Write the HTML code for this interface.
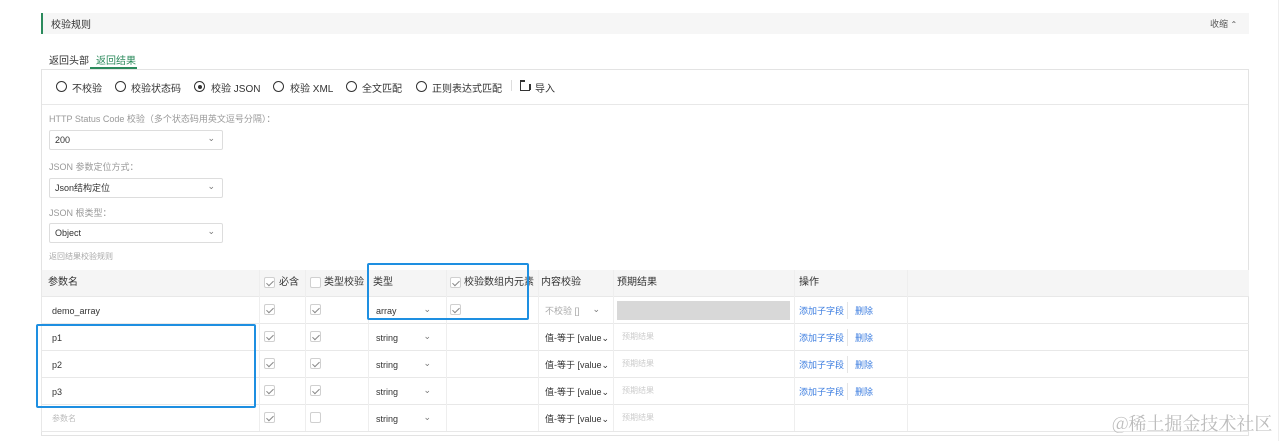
<!DOCTYPE html>
<html><head><meta charset="utf-8"><style>
*{box-sizing:border-box;margin:0;padding:0}
html,body{width:1280px;height:441px;overflow:hidden}
body{background:#fff;font-family:"Liberation Sans","Noto Sans CJK SC",sans-serif;font-size:10px;color:#333;position:relative}
.a{position:absolute}
.cb{position:absolute;width:11px;height:11px;border:1px solid #d0d0d0;border-radius:2px;background:#fff}
.cb.c::after{content:"";position:absolute;left:3px;top:1px;width:3px;height:6px;border:solid #888;border-width:0 1px 1px 0;transform:rotate(45deg)}
.rad{position:absolute;width:11px;height:11px;border:1.5px solid #333;border-radius:50%}
.sel{position:absolute;left:49px;width:174px;height:20px;border:1px solid #ddd;border-radius:2px;padding-left:5px;line-height:18px;font-size:9px}
.sel::after,.dd::after{content:"⌄";position:absolute;right:7px;top:-2px;font-size:9px;color:#777}
.lbl{position:absolute;left:49px;font-size:9px;color:#999}
.row{position:absolute;left:41px;width:1208px;height:27px;border-bottom:1px solid #e8e8e8}
.vl{position:absolute;top:270px;width:1px;height:161px;background:#eee}
.t{position:absolute;font-size:9px;line-height:12px}
.lk{color:#3d7ee0}
</style></head><body>
<div class="a" style="left:41px;top:13px;width:1208px;height:21px;background:#f6f6f6;border-left:2px solid #2b8a5c"></div>
<div class="a" style="left:51px;top:16px;font-size:10px">校验规则</div>
<div class="a" style="left:1210px;top:17px;font-size:9px;color:#555">收缩 <span style="font-size:8px">⌃</span></div>
<div class="a" style="left:49px;top:52px;font-size:10px">返回头部</div>
<div class="a" style="left:96px;top:52px;font-size:10px;color:#2b8a5c">返回结果</div>
<div class="a" style="left:90px;top:67px;width:47px;height:2px;background:#2b8a5c"></div>
<div class="a" style="left:41px;top:69px;width:1208px;height:367px;border:1px solid #e3e3e3"></div>
<div class="a" style="left:42px;top:104px;width:1206px;height:1px;background:#e8e8e8"></div>
<div class="rad" style="left:56px;top:81px"></div><div class="a" style="left:72px;top:80px">不校验</div>
<div class="rad" style="left:115px;top:81px"></div><div class="a" style="left:131px;top:80px">校验状态码</div>
<div class="rad" style="left:194px;top:81px"></div><div class="a" style="left:197.5px;top:84.5px;width:4px;height:4px;border-radius:50%;background:#333"></div><div class="a" style="left:211px;top:80px">校验 JSON</div>
<div class="rad" style="left:273px;top:81px"></div><div class="a" style="left:290px;top:80px">校验 XML</div>
<div class="rad" style="left:346px;top:81px"></div><div class="a" style="left:362px;top:80px">全文匹配</div>
<div class="rad" style="left:416px;top:81px"></div><div class="a" style="left:432px;top:80px">正则表达式匹配</div>
<div class="a" style="left:511px;top:80px;width:1px;height:11px;background:#ddd"></div>
<div class="a" style="left:520px;top:81px;width:10px;height:10px;border:1.5px solid #333;border-top:none;border-right:none"></div>
<div class="a" style="left:520px;top:80px;width:5px;height:1.5px;background:#333"></div>
<div class="a" style="left:529px;top:84px;width:1.5px;height:6px;background:#333"></div>
<div class="a" style="left:535px;top:80px">导入</div>
<div class="lbl" style="top:112px">HTTP Status Code 校验（多个状态码用英文逗号分隔）：</div>
<div class="sel" style="top:130px">200</div>
<div class="lbl" style="top:160px">JSON 参数定位方式：</div>
<div class="sel" style="top:178px">Json结构定位</div>
<div class="lbl" style="top:206px">JSON 根类型：</div>
<div class="sel" style="top:223px">Object</div>
<div class="lbl" style="top:251px;font-size:8px;color:#aaa">返回结果校验规则</div>
<div class="row" style="top:270px;background:#f5f5f5"></div>
<div class="row" style="top:297px"></div>
<div class="row" style="top:324px"></div>
<div class="row" style="top:351px"></div>
<div class="row" style="top:378px"></div>
<div class="row" style="top:405px"></div>
<div class="a" style="left:41px;top:270px;width:1px;height:162px;background:#e8e8e8"></div>
<div class="vl" style="left:259px"></div><div class="vl" style="left:305px"></div><div class="vl" style="left:368px"></div><div class="vl" style="left:446px"></div><div class="vl" style="left:538px"></div><div class="vl" style="left:613px"></div><div class="vl" style="left:794px"></div><div class="vl" style="left:907px"></div>
<div class="t" style="left:48px;top:277px;font-size:10px">参数名</div>
<div class="cb c" style="left:264px;top:277px"></div><div class="t" style="left:279px;top:277px;font-size:10px">必含</div>
<div class="cb" style="left:310px;top:277px"></div><div class="t" style="left:324px;top:277px;font-size:10px">类型校验</div>
<div class="t" style="left:373px;top:277px;font-size:10px">类型</div>
<div class="cb c" style="left:450px;top:277px"></div><div class="t" style="left:464px;top:277px;font-size:10px">校验数组内元素</div>
<div class="t" style="left:541px;top:277px;font-size:10px">内容校验</div>
<div class="t" style="left:617px;top:277px;font-size:10px">预期结果</div>
<div class="t" style="left:799px;top:277px;font-size:10px">操作</div>
<div class="t" style="left:52px;top:305px">demo_array</div>
<div class="t" style="left:52px;top:332px">p1</div>
<div class="t" style="left:52px;top:359px">p2</div>
<div class="t" style="left:52px;top:386px">p3</div>
<div class="t" style="left:52px;top:413px;color:#bbb;font-size:8px">参数名</div>
<div class="cb c" style="left:264px;top:304px"></div><div class="cb c" style="left:310px;top:304px"></div>
<div class="cb c" style="left:264px;top:331px"></div><div class="cb c" style="left:310px;top:331px"></div>
<div class="cb c" style="left:264px;top:358px"></div><div class="cb c" style="left:310px;top:358px"></div>
<div class="cb c" style="left:264px;top:385px"></div><div class="cb c" style="left:310px;top:385px"></div>
<div class="cb c" style="left:264px;top:412px"></div><div class="cb" style="left:310px;top:412px"></div>
<div class="t dd" style="left:376px;top:305px;width:62px">array</div>
<div class="t dd" style="left:376px;top:332px;width:62px">string</div>
<div class="t dd" style="left:376px;top:359px;width:62px">string</div>
<div class="t dd" style="left:376px;top:386px;width:62px">string</div>
<div class="t dd" style="left:376px;top:413px;width:62px">string</div>
<div class="cb c" style="left:450px;top:304px"></div>
<div class="t dd" style="left:545px;top:305px;width:62px;color:#aaa">不校验 []</div>
<div class="t" style="left:545px;top:332px">值-等于 [value⌄</div>
<div class="t" style="left:545px;top:359px">值-等于 [value⌄</div>
<div class="t" style="left:545px;top:386px">值-等于 [value⌄</div>
<div class="t" style="left:545px;top:413px">值-等于 [value⌄</div>
<div class="a" style="left:617px;top:301px;width:173px;height:19px;background:#d8d8d8"></div>
<div class="t" style="left:622px;top:331px;color:#ccc;font-size:8px">预期结果</div>
<div class="t" style="left:622px;top:358px;color:#ccc;font-size:8px">预期结果</div>
<div class="t" style="left:622px;top:385px;color:#ccc;font-size:8px">预期结果</div>
<div class="t" style="left:622px;top:412px;color:#ccc;font-size:8px">预期结果</div>
<div class="t lk" style="left:799px;top:305px">添加子字段</div><div class="a" style="left:847px;top:302px;width:1px;height:17px;background:#e5e5e5"></div><div class="t lk" style="left:855px;top:305px">删除</div>
<div class="t lk" style="left:799px;top:332px">添加子字段</div><div class="a" style="left:847px;top:329px;width:1px;height:17px;background:#e5e5e5"></div><div class="t lk" style="left:855px;top:332px">删除</div>
<div class="t lk" style="left:799px;top:359px">添加子字段</div><div class="a" style="left:847px;top:356px;width:1px;height:17px;background:#e5e5e5"></div><div class="t lk" style="left:855px;top:359px">删除</div>
<div class="t lk" style="left:799px;top:386px">添加子字段</div><div class="a" style="left:847px;top:383px;width:1px;height:17px;background:#e5e5e5"></div><div class="t lk" style="left:855px;top:386px">删除</div>
<div class="a" style="left:367px;top:263px;width:162px;height:57px;border:2px solid #1e8fe1;border-radius:2px"></div>
<div class="a" style="left:36px;top:324px;width:220px;height:84px;border:2px solid #1e8fe1;border-radius:2px"></div>
<div class="a" style="left:1112px;top:410px;font-family:'Noto Serif CJK SC',serif;font-size:18px;color:#bbb;white-space:nowrap">@稀土掘金技术社区</div>
<div class="a" style="left:1278px;top:0;width:1px;height:441px;background:#eee"></div>
</body></html>
